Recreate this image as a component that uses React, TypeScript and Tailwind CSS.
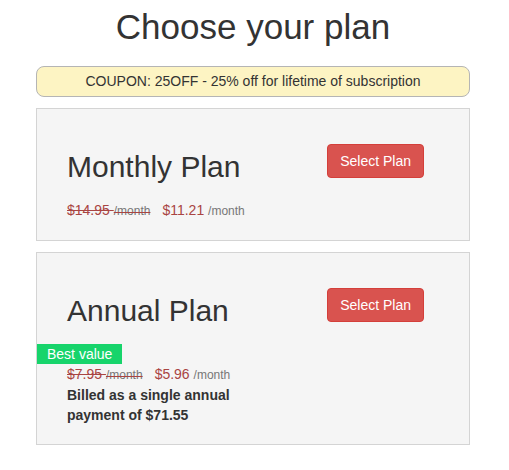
import React from "react";

function Price({ old, now }: { old: string; now: string }) {
  return (
    <div className="text-[14px] leading-[20px]">
      <span className="text-[#a94442] line-through">
        {old} <span className="text-[12px] text-[#777]">/month</span>
      </span>
      <span className="ml-3 text-[#a94442]">
        {now} <span className="text-[12px] text-[#777]">/month</span>
      </span>
    </div>
  );
}

function Card({ title, old, now, best, billed }: { title: string; old: string; now: string; best?: boolean; billed?: string }) {
  return (
    <div className="flex items-start border border-[#d4d4d4] bg-[#f5f5f5] pt-[35px] pb-[19px]">
      <div className="flex flex-1 flex-col">
        <h2 className="mt-[6px] pl-[30px] text-[30px] leading-[33px] text-[#333]">{title}</h2>
        {best ? (
          <div className="mt-[17px] w-fit bg-[#17d46b] px-[10px] text-[14px] leading-[20px] text-white">Best value</div>
        ) : (
          <div className="h-[17px]" />
        )}
        <div className="pl-[30px]">
          <Price old={old} now={now} />
          {billed && (
            <div className="w-[175px] text-[14px] font-bold leading-[20px] text-[#333]">{billed}</div>
          )}
        </div>
      </div>
      <button className="mr-[45px] rounded-[4px] border border-[#d43f3a] bg-[#d9534f] px-3 py-[6px] text-[14px] leading-[20px] text-white">
        Select Plan
      </button>
    </div>
  );
}

export default function App() {
  return (
    <div className="min-h-[470px] bg-white" style={{ fontFamily: '"Liberation Sans", Arial, sans-serif' }}>
      <div className="ml-[36px] w-[434px] pt-[7px]">
        <h1 className="text-center text-[35px] leading-[39px] text-[#333]">Choose your plan</h1>
        <div className="mt-[20px] rounded-[8px] border border-[#b5b5b5] bg-[#fdf4c3] py-[5px] text-center text-[14px] leading-[19px] text-[#333]">
          COUPON: 25OFF - 25% off for lifetime of subscription
        </div>
        <div className="mt-[11px] flex flex-col gap-[11px]">
          <Card title="Monthly Plan" old="$14.95" now="$11.21" />
          <Card title="Annual Plan" old="$7.95" now="$5.96" best billed="Billed as a single annual payment of $71.55" />
        </div>
      </div>
    </div>
  );
}
